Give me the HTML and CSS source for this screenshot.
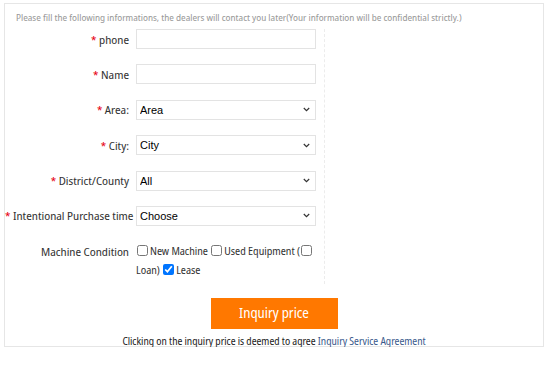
FILE: index.html
```html
<!DOCTYPE html>
<html lang="en">
<head>
  <meta charset="UTF-8">
  <meta name="viewport" content="width=device-width, initial-scale=1.0">
  <title>Inquiry</title>
  <link rel="stylesheet" href="styles.css">
</head>
<body>
  <div class="inquiry">
    <p class="intro">Please fill the following informations, the dealers will contact you later(Your information will be confidential strictly.)</p>
    <form class="form">
      <div class="row">
        <label class="label"><span class="req">*</span> phone</label>
        <input class="field" type="text">
      </div>
      <div class="row">
        <label class="label"><span class="req">*</span> Name</label>
        <input class="field" type="text">
      </div>
      <div class="row">
        <label class="label"><span class="req">*</span> Area:</label>
        <select class="field"><option>Area</option></select>
      </div>
      <div class="row">
        <label class="label"><span class="req">*</span> City:</label>
        <select class="field"><option>City</option></select>
      </div>
      <div class="row">
        <label class="label"><span class="req">*</span> District/County</label>
        <select class="field"><option>All</option></select>
      </div>
      <div class="row">
        <label class="label"><span class="req">*</span> Intentional Purchase time</label>
        <select class="field"><option>Choose</option></select>
      </div>
      <div class="row row-check">
        <label class="label">Machine Condition</label>
        <div class="checks">
          <label><input type="checkbox">New Machine</label>
          <label><input type="checkbox">Used Equipment (</label><input type="checkbox">
          Loan) <label><input type="checkbox" checked>Lease</label>
        </div>
      </div>
    </form>
    <div class="submit">
      <button class="btn" type="button">Inquiry price</button>
      <p class="agree">Clicking on the inquiry price is deemed to agree <a href="#">Inquiry Service Agreement</a></p>
    </div>
  </div>
</body>
</html>
```

FILE: styles.css
```css
body {
  margin: 0;
  padding: 3px 6px 0 4px;
  font-family: 'Noto Sans Display', 'Noto Sans', sans-serif;
  font-stretch: condensed;
  background: #fff;
}
.inquiry {
  border: 1px solid #e6e6e6;
  height: 344px;
  box-sizing: border-box;
  padding-top: 7px;
}
.intro {
  margin: 0 0 4px 11px;
  font-size: 9.5px;
  line-height: 14px;
  color: #999;
  white-space: nowrap;
}
.form {
  width: 319px;
  border-right: 1px dashed #ececec;
  padding-bottom: 4px;
}
.row {
  display: flex;
  align-items: center;
  height: 20px;
  margin-bottom: 15.4px;
}
.label {
  width: 131px;
  flex-shrink: 0;
  box-sizing: border-box;
  padding-right: 7px;
  text-align: right;
  font-size: 11.5px;
  color: #333;
  white-space: nowrap;
}
.req {
  color: #e60012;
}
.field {
  width: 180px;
  height: 20px;
  box-sizing: border-box;
  border: 1px solid #e3e3e3;
  border-radius: 0;
  background: #fff;
  font-family: 'Liberation Sans', Arial, sans-serif;
  font-size: 11px;
  color: #000;
  padding: 0 1px;
}
select.field {
  appearance: none;
  -webkit-appearance: none;
  padding: 0 16px 0 3px;
  background: #fff url("data:image/svg+xml,%3Csvg xmlns='http://www.w3.org/2000/svg' width='7' height='5' viewBox='0 0 7 5'%3E%3Cpath d='M0.8 1l2.7 2.6L6.2 1' fill='none' stroke='%23333' stroke-width='1.2'/%3E%3C/svg%3E") no-repeat right 5px center;
}
.row-check {
  align-items: flex-start;
  height: auto;
  margin: 16px 0 0;
}
.row-check .label {
  line-height: 19px;
}
.checks {
  width: 180px;
  font-size: 10.5px;
  color: #333;
  line-height: 19px;
}
.checks label {
  white-space: nowrap;
}
.checks input {
  width: 11px;
  height: 11px;
  margin: 0 2px 0 1px;
  vertical-align: -1px;
}
.submit {
  text-align: center;
  padding-top: 14px;
}
.btn {
  width: 127px;
  height: 31px;
  border: 0;
  background: #ff7800;
  color: #fff;
  font-family: 'Noto Sans Display', 'Noto Sans', sans-serif;
  font-stretch: condensed;
  font-size: 13.5px;
  cursor: pointer;
}
.agree {
  margin: 4px 0 0;
  font-size: 10px;
  line-height: 16px;
  color: #222;
}
.agree a {
  color: #3a5a8c;
  text-decoration: none;
}
```
